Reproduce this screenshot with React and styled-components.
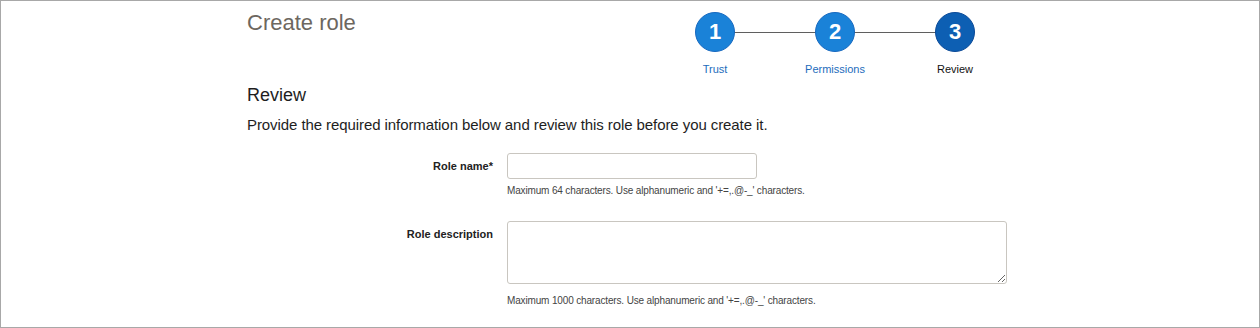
import React from 'react';
import styled, { createGlobalStyle } from 'styled-components';

const GlobalStyle = createGlobalStyle`
  html, body {
    margin: 0;
    padding: 0;
    background: #fff;
  }
  body {
    font-family: "Liberation Sans", Arial, sans-serif;
  }
`;

const Frame = styled.div`
  box-sizing: border-box;
  width: 1260px;
  height: 328px;
  border: 1px solid #a8a8a8;
  overflow: hidden;
`;

const Content = styled.div`
  width: 766px;
  margin: 0 auto;
`;

const Header = styled.div`
  display: flex;
  align-items: flex-start;
  height: 84px;
`;

const Title = styled.h1`
  margin: 9px 0 0;
  font-size: 22px;
  font-weight: normal;
  line-height: 25px;
  color: #6d675f;
`;

const Steps = styled.ol`
  display: flex;
  list-style: none;
  margin: 11px -2px 0 auto;
  padding: 0;
`;

const Step = styled.li`
  position: relative;
  width: 120px;
  display: flex;
  flex-direction: column;
  align-items: center;

  &:not(:last-child)::after {
    content: '';
    position: absolute;
    top: 20px;
    left: 60px;
    width: 120px;
    height: 1px;
    background: #5f5f5f;
  }
`;

const Circle = styled.div`
  position: relative;
  z-index: 1;
  box-sizing: border-box;
  width: 40px;
  height: 40px;
  border-radius: 50%;
  border: 1px solid ${(p) => (p.$current ? '#0b4a98' : '#1769c0')};
  background: ${(p) => (p.$current ? '#0d5fb3' : '#1a82d8')};
  color: #fff;
  font-size: 22px;
  font-weight: bold;
  display: flex;
  align-items: center;
  justify-content: center;
`;

const StepLabel = styled.span`
  margin-top: 11px;
  font-size: 11px;
  line-height: 13px;
  color: ${(p) => (p.$current ? '#111' : '#1d6cbc')};
`;

const SectionTitle = styled.h2`
  margin: 0;
  font-size: 18px;
  font-weight: normal;
  line-height: 21px;
  color: #1e1e1e;
`;

const Intro = styled.p`
  margin: 10px 0 0;
  font-size: 15px;
  line-height: 17px;
  letter-spacing: -0.08px;
  color: #1e1e1e;
`;

const FormRow = styled.div`
  display: grid;
  grid-template-columns: 246px 1fr;
  column-gap: 14px;
  margin-top: ${(p) => p.$top}px;
`;

const Label = styled.label`
  text-align: right;
  font-size: 11px;
  font-weight: bold;
  line-height: 13px;
  color: #222;
  padding-top: 7px;
`;

const Field = styled.div`
  display: flex;
  flex-direction: column;
  align-items: flex-start;
`;

const TextInput = styled.input`
  box-sizing: border-box;
  width: 250px;
  height: 26px;
  border: 1px solid #c9c6c0;
  border-radius: 3px;
  background: #fff;
  margin: 0;
`;

const TextArea = styled.textarea`
  box-sizing: border-box;
  width: 500px;
  height: 63px;
  border: 1px solid #c9c6c0;
  border-radius: 3px;
  background: #fff;
  margin: 0;
  resize: vertical;
  font-family: inherit;
`;

const Help = styled.div`
  margin-top: ${(p) => p.$gap}px;
  font-size: 10px;
  line-height: 12px;
  letter-spacing: -0.15px;
  color: #444;
`;

const steps = [
  { n: 1, label: 'Trust' },
  { n: 2, label: 'Permissions' },
  { n: 3, label: 'Review', current: true },
];

export default function App() {
  return (
    <>
      <GlobalStyle />
      <Frame>
        <Content>
          <Header>
            <Title>Create role</Title>
            <Steps>
              {steps.map((s) => (
                <Step key={s.n}>
                  <Circle $current={s.current}>{s.n}</Circle>
                  <StepLabel $current={s.current}>{s.label}</StepLabel>
                </Step>
              ))}
            </Steps>
          </Header>
          <SectionTitle>Review</SectionTitle>
          <Intro>Provide the required information below and review this role before you create it.</Intro>

          <FormRow $top={20}>
            <Label>Role name*</Label>
            <Field>
              <TextInput type="text" />
              <Help $gap={6}>Maximum 64 characters. Use alphanumeric and '+=,.@-_' characters.</Help>
            </Field>
          </FormRow>

          <FormRow $top={24}>
            <Label>Role description</Label>
            <Field>
              <TextArea />
              <Help $gap={11}>Maximum 1000 characters. Use alphanumeric and '+=,.@-_' characters.</Help>
            </Field>
          </FormRow>
        </Content>
      </Frame>
    </>
  );
}
